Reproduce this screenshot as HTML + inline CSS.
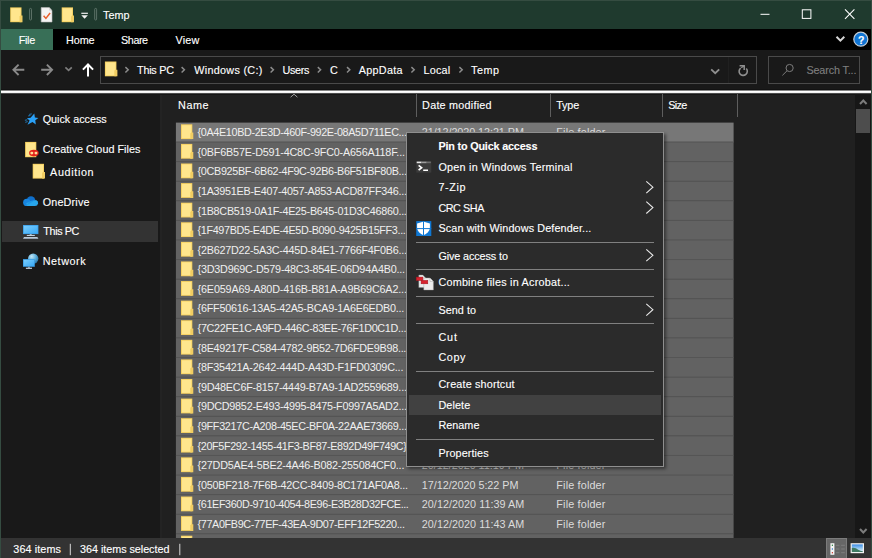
<!DOCTYPE html>
<html><head><meta charset="utf-8"><title>Temp</title>
<style>
html,body{margin:0;padding:0;background:#191919;}
body{width:872px;height:558px;position:relative;overflow:hidden;font-family:"Liberation Sans",Arial,sans-serif;font-size:10.8px;color:#fff;}
.abs{position:absolute;}
.t{position:absolute;white-space:pre;line-height:14px;height:14px;-webkit-text-stroke:0.12px currentColor;}
.l{-webkit-text-stroke:0;}
#win{position:absolute;left:0;top:0;width:872px;height:558px;background:#191919;}
#title{left:0;top:0;width:872px;height:29px;background:#1f3a2e;}
#ribbon{left:1px;top:29px;width:870px;height:21px;background:#000;}
#filetab{left:1px;top:29px;width:52px;height:21px;background:#386f57;}
#addr{left:1px;top:50px;width:870px;height:40px;background:#191919;}
#addrbox{left:100px;top:56px;width:655px;height:26px;border:1px solid #4a4a4a;background:#191919;}
#refdiv{left:728px;top:57px;width:1px;height:26px;background:#202020;}
#search{left:768px;top:56px;width:90px;height:26px;border:1px solid #4a4a4a;background:#191919;}
#wline{left:1px;top:89px;width:870px;height:6px;background:linear-gradient(#131313 0,#131313 1px,#858585 1px,#858585 2px,#fff 2px,#fff 3px,#f2f2f2 3px,#f2f2f2 4px,#4c4c4c 4px,#4c4c4c 5px,#161616 5px,#161616 6px);}
#nav{left:1px;top:94px;width:159px;height:444px;background:#191919;}
#split{left:160px;top:94px;width:2px;height:444px;background:#232323;}
#files{left:162px;top:94px;width:693px;height:444px;background:#202020;}
#navsel{left:2px;top:221px;width:156px;height:21px;background:#333333;}
#sbar{left:855px;top:94px;width:16px;height:444px;background:#171717;}
#thumb{left:856px;top:109px;width:14px;height:24px;background:#4d4d4d;}
#status{left:1px;top:538px;width:870px;height:20px;background:#333333;}
#bl{left:0;top:0;width:1px;height:558px;background:#354c41;}
#br{left:871px;top:0;width:1px;height:558px;background:#354c41;}
#bt{left:0;top:0;width:872px;height:1px;background:#354c41;}
#menu{left:406px;top:132px;width:256px;height:333px;background:#2b2b2b;border:1px solid #8f8f8f;box-shadow:2px 2px 3px rgba(0,0,0,.45);box-sizing:content-box;}
#menuhl{left:409px;top:395px;width:252px;height:20px;background:#414141;}
.msep{position:absolute;left:416px;width:238px;height:1px;background:#808080;}
.csep{position:absolute;top:94px;width:1px;height:23px;background:#5e5e5e;}
svg{position:absolute;left:0;top:0;overflow:visible;}
</style></head>
<body>
<div id="win">
<div class="abs" id="title"></div>
<div class="abs" id="ribbon"></div>
<div class="abs" id="filetab"></div>
<div class="abs" id="addr"></div>
<div class="abs" id="addrbox"></div>
<div class="abs" id="refdiv"></div>
<div class="abs" id="search"></div>
<div class="abs" id="nav"></div>
<div class="abs" id="split"></div>
<div class="abs" id="files"></div>
<div class="abs" id="wline"></div>
<div class="abs" id="navsel"></div>
<div class="abs" id="sbar"></div>
<div class="abs" id="thumb"></div>
<div class="abs" id="status"></div>
<div class="abs" id="bl"></div>
<div class="abs" id="br"></div>
<div class="abs" id="bt"></div>
<div class="csep" style="left:416px"></div>
<div class="csep" style="left:550px"></div>
<div class="csep" style="left:662px"></div>
<div class="csep" style="left:737px"></div>

<svg width="872" height="558" viewBox="0 0 872 558">
<defs>
<g id="fold">
<rect x="0" y="0" width="11.3" height="14.8" fill="#f6d05f"/>
<rect x="0.9" y="0.9" width="9.5" height="13" fill="#ffe68d"/>
<path d="M9.3 14.8V9.2l1-1h2v6.6z" fill="#f1cd62"/>
</g>
<g id="chev"><path d="M0 0l6.6 5.9L0 11.8" fill="none" stroke="#e8e8e8" stroke-width="1.1"/></g>
<g id="crumb"><path d="M0 0l2.800 2.700L0 5.400" fill="none" stroke="#8c8c8c" stroke-width="1.500"/></g>
</defs>
<clipPath id="cp"><rect x="162" y="94" width="693" height="444"/></clipPath><g clip-path="url(#cp)">
<rect x="175.9" y="122.60" width="557.7" height="19.59" fill="#777777"/>
<rect x="175.9" y="142.01" width="557.7" height="19.59" fill="#626262"/>
<rect x="175.9" y="141.51" width="557.7" height="1" fill="#555555"/>
<rect x="175.9" y="161.60" width="557.7" height="19.59" fill="#626262"/>
<rect x="175.9" y="161.10" width="557.7" height="1" fill="#555555"/>
<rect x="175.9" y="181.19" width="557.7" height="19.59" fill="#626262"/>
<rect x="175.9" y="180.69" width="557.7" height="1" fill="#555555"/>
<rect x="175.9" y="200.78" width="557.7" height="19.59" fill="#626262"/>
<rect x="175.9" y="200.28" width="557.7" height="1" fill="#555555"/>
<rect x="175.9" y="220.37" width="557.7" height="19.59" fill="#626262"/>
<rect x="175.9" y="219.87" width="557.7" height="1" fill="#555555"/>
<rect x="175.9" y="239.96" width="557.7" height="19.59" fill="#626262"/>
<rect x="175.9" y="239.46" width="557.7" height="1" fill="#555555"/>
<rect x="175.9" y="259.55" width="557.7" height="19.59" fill="#626262"/>
<rect x="175.9" y="259.05" width="557.7" height="1" fill="#555555"/>
<rect x="175.9" y="279.14" width="557.7" height="19.59" fill="#626262"/>
<rect x="175.9" y="278.64" width="557.7" height="1" fill="#555555"/>
<rect x="175.9" y="298.73" width="557.7" height="19.59" fill="#626262"/>
<rect x="175.9" y="298.23" width="557.7" height="1" fill="#555555"/>
<rect x="175.9" y="318.32" width="557.7" height="19.59" fill="#626262"/>
<rect x="175.9" y="317.82" width="557.7" height="1" fill="#555555"/>
<rect x="175.9" y="337.91" width="557.7" height="19.59" fill="#626262"/>
<rect x="175.9" y="337.41" width="557.7" height="1" fill="#555555"/>
<rect x="175.9" y="357.50" width="557.7" height="19.59" fill="#626262"/>
<rect x="175.9" y="357.00" width="557.7" height="1" fill="#555555"/>
<rect x="175.9" y="377.09" width="557.7" height="19.59" fill="#626262"/>
<rect x="175.9" y="376.59" width="557.7" height="1" fill="#555555"/>
<rect x="175.9" y="396.68" width="557.7" height="19.59" fill="#626262"/>
<rect x="175.9" y="396.18" width="557.7" height="1" fill="#555555"/>
<rect x="175.9" y="416.27" width="557.7" height="19.59" fill="#626262"/>
<rect x="175.9" y="415.77" width="557.7" height="1" fill="#555555"/>
<rect x="175.9" y="435.86" width="557.7" height="19.59" fill="#626262"/>
<rect x="175.9" y="435.36" width="557.7" height="1" fill="#555555"/>
<rect x="175.9" y="455.45" width="557.7" height="19.59" fill="#626262"/>
<rect x="175.9" y="454.95" width="557.7" height="1" fill="#555555"/>
<rect x="175.9" y="475.04" width="557.7" height="19.59" fill="#626262"/>
<rect x="175.9" y="474.54" width="557.7" height="1" fill="#555555"/>
<rect x="175.9" y="494.63" width="557.7" height="19.59" fill="#626262"/>
<rect x="175.9" y="494.13" width="557.7" height="1" fill="#555555"/>
<rect x="175.9" y="514.22" width="557.7" height="19.59" fill="#626262"/>
<rect x="175.9" y="513.72" width="557.7" height="1" fill="#555555"/>
<rect x="175.9" y="533.81" width="557.7" height="19.59" fill="#626262"/>
<rect x="175.9" y="533.31" width="557.7" height="1" fill="#555555"/>
<use href="#fold" x="181" y="124.32"/>
<use href="#fold" x="181" y="143.91"/>
<use href="#fold" x="181" y="163.50"/>
<use href="#fold" x="181" y="183.09"/>
<use href="#fold" x="181" y="202.68"/>
<use href="#fold" x="181" y="222.27"/>
<use href="#fold" x="181" y="241.86"/>
<use href="#fold" x="181" y="261.45"/>
<use href="#fold" x="181" y="281.04"/>
<use href="#fold" x="181" y="300.63"/>
<use href="#fold" x="181" y="320.22"/>
<use href="#fold" x="181" y="339.81"/>
<use href="#fold" x="181" y="359.40"/>
<use href="#fold" x="181" y="378.99"/>
<use href="#fold" x="181" y="398.58"/>
<use href="#fold" x="181" y="418.17"/>
<use href="#fold" x="181" y="437.76"/>
<use href="#fold" x="181" y="457.35"/>
<use href="#fold" x="181" y="476.94"/>
<use href="#fold" x="181" y="496.53"/>
<use href="#fold" x="181" y="516.12"/>
<use href="#fold" x="181" y="535.71"/>
</g>
<!-- title bar icons -->
<use href="#fold" x="10.2" y="7.4"/>
<rect x="29.6" y="8.4" width="1.9" height="11.6" rx=".9" fill="none" stroke="#6b7f75" stroke-width=".8"/>
<g transform="translate(41.2,7.6)">
<path d="M0 0h8l2.8 2.8V14.4H0z" fill="#f4f4f4" stroke="#b9b9b9" stroke-width=".6"/>
<path d="M8 0v2.8h2.8" fill="#d5d5d5"/>
<path d="M2.4 8.2l2.3 2.6l4.2-5.4" fill="none" stroke="#e8602c" stroke-width="1.5"/>
</g>
<use href="#fold" x="61.7" y="7.4"/>
<rect x="81.3" y="12.7" width="6.6" height="1.2" fill="#f0f0f0"/>
<path d="M81.3 15.3h6.6l-3.3 3.5z" fill="#f0f0f0"/>
<rect x="94.7" y="8.4" width="1.9" height="11.6" rx=".9" fill="none" stroke="#6b7f75" stroke-width=".8"/>
<!-- window controls -->
<rect x="760.5" y="13.8" width="9" height="1" fill="#fff"/>
<rect x="802.3" y="9.8" width="8.6" height="8.6" fill="none" stroke="#fff" stroke-width="1"/>
<path d="M845 9.4l9.4 9.4M854.4 9.4l-9.4 9.4" stroke="#fff" stroke-width="1.1" fill="none"/>
<!-- ribbon right -->
<path d="M836.5 36.8l3.9 3.8l3.9-3.8" fill="none" stroke="#d6d6d6" stroke-width="2"/>
<circle cx="860.8" cy="39.2" r="7" fill="#0f74d4" stroke="#c4cdd6" stroke-width="1.2"/>
<!-- nav arrows -->
<path d="M24.3 69.8H13.6M18.6 64.6l-5.2 5.2l5.2 5.2" fill="none" stroke="#8a8a8a" stroke-width="1.9"/>
<path d="M41.2 69.8H51.9M46.9 64.6l5.2 5.2l-5.2 5.2" fill="none" stroke="#8a8a8a" stroke-width="1.9"/>
<path d="M65.4 67.4l3.2 3l3.2-3" fill="none" stroke="#7d7d7d" stroke-width="1.7"/>
<path d="M88 76.4V64.6M82.9 69.6l5.1-5.1l5.1 5.1" fill="none" stroke="#ffffff" stroke-width="2"/>
<g transform="translate(104.9,61.5)"><rect x="0" y="0" width="11.5" height="14.8" fill="#f6d05f"/><rect x=".9" y=".9" width="9.7" height="13" fill="#ffe68d"/><path d="M9.4 14.8V9.2l1-1h2.1v6.6z" fill="#f1cd62"/></g>
<use href="#crumb" x="125.4" y="67.100"/>
<use href="#crumb" x="181.6" y="67.100"/>
<use href="#crumb" x="270.6" y="67.100"/>
<use href="#crumb" x="317.8" y="67.100"/>
<use href="#crumb" x="347" y="67.100"/>
<use href="#crumb" x="411.4" y="67.100"/>
<use href="#crumb" x="459.4" y="67.100"/>
<path d="M711.2 69.4l4 3.8l4-3.8" fill="none" stroke="#8f8f8f" stroke-width="1.9"/>
<path d="M746.25 68.56A4.1 4.1 0 1 1 740.68 68.07" fill="none" stroke="#8f8f8f" stroke-width="1.6"/>
<path d="M739.6 65.7h4.6v4.4" fill="none" stroke="#8f8f8f" stroke-width="1.5"/><path d="M741.2 67.8l3-2.1" stroke="#8f8f8f" stroke-width="1.4"/>
<circle cx="789.6" cy="68" r="3.6" fill="none" stroke="#7c7c7c" stroke-width="1"/>
<path d="M787 70.8l-4.6 4.6" stroke="#7c7c7c" stroke-width="1"/>
<!-- sort chevron -->
<path d="M290.6 97.2l3.4-3l3.4 3" fill="none" stroke="#9d9d9d" stroke-width="1"/>
<!-- scrollbar arrows -->
<path d="M860 104l3.300-3.500l3.300 3.500" fill="none" stroke="#7c7c7c" stroke-width="2"/>
<path d="M860 529l3.300 3.500l3.300-3.500" fill="none" stroke="#7c7c7c" stroke-width="2"/>
<!-- nav icons -->
<defs>
<linearGradient id="gmon" x1="0" y1="0" x2="1" y2="1"><stop offset="0" stop-color="#7bcdfd"/><stop offset="1" stop-color="#38a9f5"/></linearGradient>
<radialGradient id="gglobe" cx=".35" cy=".3" r=".8"><stop offset="0" stop-color="#c4e6f5"/><stop offset=".5" stop-color="#5fb0dc"/><stop offset="1" stop-color="#1f6c9e"/></radialGradient>
</defs>
<path d="M34.3 113.6l.6 3.800l3.500.600l-3.100 2.200l.500 4.400l-3.300-2.500l-5 2.700l2.100-4.300l-2.700-2.300l3.700-.500z" fill="#2aa0f6"/>
<path d="M29.200 114.400l2.600-.500M28.200 115.900l2.200-.400M24.900 120.300l2.400-.500M25.300 122.300l2.400-.700" stroke="#2390e0" stroke-width=".8" fill="none"/>
<g transform="translate(25.100,141.900)"><rect x="0" y="0" width="11.200" height="15.300" fill="#f6d05f"/><rect x=".9" y=".9" width="9.400" height="13.500" fill="#ffe68d"/><ellipse cx="8.800" cy="11.200" rx="4.800" ry="3.300" fill="#e2231a"/><ellipse cx="6.700" cy="11.200" rx="1.500" ry="1.300" fill="#ffdb95"/><ellipse cx="10.900" cy="11.200" rx="1.500" ry="1.300" fill="#ffdb95"/></g>
<use href="#fold" x="32.700" y="163.800"/>
<circle cx="31" cy="200.600" r="4.300" fill="#0f70cc"/>
<circle cx="26.800" cy="202.400" r="3.700" fill="#1885df"/>
<path d="M26.800 206.100h8.200a3.200 3.200 0 0 0 1-6.200l-9.600 3.200z" fill="#28a6ec"/>
<path d="M26 206.100l9.600-6.300l-6 1.400z" fill="#1e96e6"/>
<g transform="translate(23,225)"><rect x="0" y="0" width="15.400" height="9.100" fill="#3a9fe8"/><rect x=".8" y=".8" width="13.800" height="7.500" fill="url(#gmon)"/><rect x="6.700" y="9.100" width="2" height="1" fill="#a9bccd"/><rect x="3.800" y="9.900" width="8" height="1.100" fill="#c3d2e0"/><path d="M1 11.900h13.400l1 1.900h-15.400z" fill="#b9c9d9"/></g>
<circle cx="33.200" cy="258.600" r="5.200" fill="url(#gglobe)"/>
<g transform="translate(23,259.100)"><rect x="0" y="0" width="11.800" height="7.700" fill="#3a9fe8"/><rect x=".8" y=".8" width="10.200" height="6.100" fill="url(#gmon)"/><rect x="4.900" y="7.700" width="2" height=".9" fill="#a9bccd"/><rect x="2.900" y="8.600" width="6.100" height="1.200" fill="#c3d2e0"/></g>
<!-- status bar view buttons -->
<rect x="826.500" y="538.500" width="20" height="20" fill="#666666" stroke="#7c7c7c" stroke-width="1"/>
<rect x="830.400" y="543.200" width="4" height="11.600" fill="#f4f4f4"/>
<rect x="831.800" y="544.600" width="1.200" height="1.400" fill="#3a8a4a"/><rect x="831.800" y="548.300" width="1.200" height="1.400" fill="#3f7fd0"/><rect x="831.800" y="552" width="1.200" height="1.400" fill="#d0443a"/>
<path d="M836 545.300h3.400M841.200 545.300h3.600M836 549h3.400M841.200 549h3.600M836 552.700h3.400M841.200 552.700h3.600" stroke="#7e7e7e" stroke-width="1"/>
<rect x="850.600" y="543.200" width="13.400" height="10" fill="#f2f2f2"/>
<linearGradient id="gsky" x1="0" y1="0" x2="0" y2="1"><stop offset="0" stop-color="#3a8be6"/><stop offset=".55" stop-color="#9ccdf3"/><stop offset="1" stop-color="#eef6fb"/></linearGradient><rect x="851.800" y="544.400" width="11" height="7.600" fill="url(#gsky)"/>
<path d="M851.800 552v-4c2.400-.6 4.600.4 6.400 1.800c1.600.8 3 1.200 4.600 1.400v.8z" fill="#3f7a63"/>
<!-- status separators -->
<rect x="69.800" y="543.800" width="1" height="11.400" fill="#d8d8d8"/>
<rect x="179.300" y="543.800" width="1" height="11.400" fill="#d8d8d8"/>
</svg>

<span class="t" style="left:857.900px;top:32.700px;font-weight:700;font-size:10.500px;color:#fff;">?</span>
<span class="t" style="left:102.9px;top:7.9px;letter-spacing:0.098px;color:#ffffff;">Temp</span>
<span class="t" style="left:18.8px;top:32.9px;letter-spacing:-0.335px;color:#ffffff;">File</span>
<span class="t" style="left:66.1px;top:32.9px;letter-spacing:-0.104px;color:#ffffff;">Home</span>
<span class="t" style="left:121.1px;top:32.9px;letter-spacing:-0.453px;color:#ffffff;">Share</span>
<span class="t" style="left:175.4px;top:32.9px;letter-spacing:0.260px;color:#ffffff;">View</span>
<span class="t" style="left:137.0px;top:62.6px;letter-spacing:-0.218px;color:#ffffff;">This PC</span>
<span class="t" style="left:194.2px;top:62.6px;letter-spacing:0.300px;color:#ffffff;">Windows (C:)</span>
<span class="t" style="left:282.4px;top:62.6px;letter-spacing:-0.301px;color:#ffffff;">Users</span>
<span class="t" style="left:329.9px;top:62.6px;letter-spacing:0.688px;color:#ffffff;">C</span>
<span class="t" style="left:358.7px;top:62.6px;letter-spacing:0.311px;color:#ffffff;">AppData</span>
<span class="t" style="left:423.4px;top:62.6px;letter-spacing:0.247px;color:#ffffff;">Local</span>
<span class="t" style="left:471.0px;top:62.6px;letter-spacing:0.498px;color:#ffffff;">Temp</span>
<span class="t" style="left:806.4px;top:62.6px;letter-spacing:-0.142px;color:#7e7e7e;">Search T...</span>
<span class="t" style="left:42.7px;top:112.1px;letter-spacing:-0.018px;color:#ffffff;">Quick access</span>
<span class="t" style="left:42.7px;top:142.4px;letter-spacing:0.025px;color:#ffffff;">Creative Cloud Files</span>
<span class="t" style="left:50.1px;top:164.6px;letter-spacing:0.638px;color:#ffffff;">Audition</span>
<span class="t" style="left:42.7px;top:194.8px;letter-spacing:0.170px;color:#ffffff;">OneDrive</span>
<span class="t" style="left:43.3px;top:224.4px;letter-spacing:-0.384px;color:#ffffff;">This PC</span>
<span class="t" style="left:42.7px;top:254.3px;letter-spacing:0.548px;color:#ffffff;">Network</span>
<span class="t" style="left:178.1px;top:98.4px;letter-spacing:0.496px;color:#ffffff;">Name</span>
<span class="t" style="left:422.1px;top:98.4px;letter-spacing:0.240px;color:#ffffff;">Date modified</span>
<span class="t" style="left:556.3px;top:98.4px;letter-spacing:-0.174px;color:#ffffff;">Type</span>
<span class="t" style="left:668.2px;top:98.4px;letter-spacing:-0.605px;color:#ffffff;">Size</span>
<span class="t" style="left:13.3px;top:542.1px;letter-spacing:0.098px;color:#ffffff;">364 items</span>
<span class="t" style="left:80.1px;top:542.1px;letter-spacing:-0.043px;color:#ffffff;">364 items selected</span>
<span class="t l" style="left:197.6px;top:125.1px;letter-spacing:-0.356px;color:#efefef;">{0A4E10BD-2E3D-460F-992E-08A5D711EC...</span>
<span class="t l" style="left:421.8px;top:125.1px;letter-spacing:-0.065px;color:#dcdcdc;">21/12/2020 12:21 PM</span>
<span class="t l" style="left:556.3px;top:125.1px;letter-spacing:0.169px;color:#dcdcdc;">File folder</span>
<span class="t l" style="left:197.6px;top:144.7px;letter-spacing:-0.185px;color:#efefef;">{0BF6B57E-D591-4C8C-9FC0-A656A118F...</span>
<span class="t l" style="left:421.8px;top:144.7px;letter-spacing:-0.065px;color:#dcdcdc;">21/12/2020 12:21 PM</span>
<span class="t l" style="left:556.3px;top:144.7px;letter-spacing:0.169px;color:#dcdcdc;">File folder</span>
<span class="t l" style="left:197.6px;top:164.3px;letter-spacing:-0.328px;color:#efefef;">{0CB925BF-6B62-4F9C-92B6-B6F51BF80B...</span>
<span class="t l" style="left:421.8px;top:164.3px;letter-spacing:-0.065px;color:#dcdcdc;">21/12/2020 12:21 PM</span>
<span class="t l" style="left:556.3px;top:164.3px;letter-spacing:0.169px;color:#dcdcdc;">File folder</span>
<span class="t l" style="left:197.6px;top:183.9px;letter-spacing:-0.264px;color:#efefef;">{1A3951EB-E407-4057-A853-ACD87FF346...</span>
<span class="t l" style="left:421.8px;top:183.9px;letter-spacing:-0.065px;color:#dcdcdc;">21/12/2020 12:21 PM</span>
<span class="t l" style="left:556.3px;top:183.9px;letter-spacing:0.169px;color:#dcdcdc;">File folder</span>
<span class="t l" style="left:197.6px;top:203.5px;letter-spacing:-0.265px;color:#efefef;">{1B8CB519-0A1F-4E25-B645-01D3C46860...</span>
<span class="t l" style="left:421.8px;top:203.5px;letter-spacing:-0.065px;color:#dcdcdc;">21/12/2020 12:21 PM</span>
<span class="t l" style="left:556.3px;top:203.5px;letter-spacing:0.169px;color:#dcdcdc;">File folder</span>
<span class="t l" style="left:197.6px;top:223.1px;letter-spacing:-0.359px;color:#efefef;">{1F497BD5-E4DE-4E5D-B090-9425B15FF3...</span>
<span class="t l" style="left:421.8px;top:223.1px;letter-spacing:-0.065px;color:#dcdcdc;">21/12/2020 12:21 PM</span>
<span class="t l" style="left:556.3px;top:223.1px;letter-spacing:0.169px;color:#dcdcdc;">File folder</span>
<span class="t l" style="left:197.6px;top:242.7px;letter-spacing:-0.248px;color:#efefef;">{2B627D22-5A3C-445D-84E1-7766F4F0B6...</span>
<span class="t l" style="left:421.8px;top:242.7px;letter-spacing:-0.065px;color:#dcdcdc;">21/12/2020 12:21 PM</span>
<span class="t l" style="left:556.3px;top:242.7px;letter-spacing:0.169px;color:#dcdcdc;">File folder</span>
<span class="t l" style="left:197.6px;top:262.3px;letter-spacing:-0.224px;color:#efefef;">{3D3D969C-D579-48C3-854E-06D94A4B0...</span>
<span class="t l" style="left:421.8px;top:262.3px;letter-spacing:-0.065px;color:#dcdcdc;">21/12/2020 12:21 PM</span>
<span class="t l" style="left:556.3px;top:262.3px;letter-spacing:0.169px;color:#dcdcdc;">File folder</span>
<span class="t l" style="left:197.6px;top:281.8px;letter-spacing:-0.172px;color:#efefef;">{6E059A69-A80D-416B-B81A-A9B69C6A2...</span>
<span class="t l" style="left:421.8px;top:281.8px;letter-spacing:-0.065px;color:#dcdcdc;">21/12/2020 12:21 PM</span>
<span class="t l" style="left:556.3px;top:281.8px;letter-spacing:0.169px;color:#dcdcdc;">File folder</span>
<span class="t l" style="left:197.6px;top:301.4px;letter-spacing:-0.246px;color:#efefef;">{6FF50616-13A5-42A5-BCA9-1A6E6EDB0...</span>
<span class="t l" style="left:421.8px;top:301.4px;letter-spacing:-0.065px;color:#dcdcdc;">21/12/2020 12:21 PM</span>
<span class="t l" style="left:556.3px;top:301.4px;letter-spacing:0.169px;color:#dcdcdc;">File folder</span>
<span class="t l" style="left:197.6px;top:321.0px;letter-spacing:-0.318px;color:#efefef;">{7C22FE1C-A9FD-446C-83EE-76F1D0C1D...</span>
<span class="t l" style="left:421.8px;top:321.0px;letter-spacing:-0.065px;color:#dcdcdc;">21/12/2020 12:21 PM</span>
<span class="t l" style="left:556.3px;top:321.0px;letter-spacing:0.169px;color:#dcdcdc;">File folder</span>
<span class="t l" style="left:197.6px;top:340.6px;letter-spacing:-0.262px;color:#efefef;">{8E49217F-C584-4782-9B52-7D6FDE9B98...</span>
<span class="t l" style="left:421.8px;top:340.6px;letter-spacing:-0.065px;color:#dcdcdc;">21/12/2020 12:21 PM</span>
<span class="t l" style="left:556.3px;top:340.6px;letter-spacing:0.169px;color:#dcdcdc;">File folder</span>
<span class="t l" style="left:197.6px;top:360.2px;letter-spacing:-0.185px;color:#efefef;">{8F35421A-2642-444D-A43D-F1FD0309C...</span>
<span class="t l" style="left:421.8px;top:360.2px;letter-spacing:-0.065px;color:#dcdcdc;">21/12/2020 12:21 PM</span>
<span class="t l" style="left:556.3px;top:360.2px;letter-spacing:0.169px;color:#dcdcdc;">File folder</span>
<span class="t l" style="left:197.6px;top:379.8px;letter-spacing:-0.232px;color:#efefef;">{9D48EC6F-8157-4449-B7A9-1AD2559689...</span>
<span class="t l" style="left:421.8px;top:379.8px;letter-spacing:-0.065px;color:#dcdcdc;">21/12/2020 12:21 PM</span>
<span class="t l" style="left:556.3px;top:379.8px;letter-spacing:0.169px;color:#dcdcdc;">File folder</span>
<span class="t l" style="left:197.6px;top:399.4px;letter-spacing:-0.248px;color:#efefef;">{9DCD9852-E493-4995-8475-F0997A5AD2...</span>
<span class="t l" style="left:421.8px;top:399.4px;letter-spacing:-0.065px;color:#dcdcdc;">21/12/2020 12:21 PM</span>
<span class="t l" style="left:556.3px;top:399.4px;letter-spacing:0.169px;color:#dcdcdc;">File folder</span>
<span class="t l" style="left:197.6px;top:419.0px;letter-spacing:-0.313px;color:#efefef;">{9FF3217C-A208-45EC-BF0A-22AAE73669...</span>
<span class="t l" style="left:421.8px;top:419.0px;letter-spacing:-0.065px;color:#dcdcdc;">21/12/2020 12:21 PM</span>
<span class="t l" style="left:556.3px;top:419.0px;letter-spacing:0.169px;color:#dcdcdc;">File folder</span>
<span class="t l" style="left:197.6px;top:438.6px;letter-spacing:-0.362px;color:#efefef;">{20F5F292-1455-41F3-BF87-E892D49F749C}</span>
<span class="t l" style="left:421.8px;top:438.6px;letter-spacing:-0.065px;color:#dcdcdc;">21/12/2020 12:21 PM</span>
<span class="t l" style="left:556.3px;top:438.6px;letter-spacing:0.169px;color:#dcdcdc;">File folder</span>
<span class="t l" style="left:197.6px;top:458.2px;letter-spacing:-0.208px;color:#efefef;">{27DD5AE4-5BE2-4A46-B082-255084CF0...</span>
<span class="t l" style="left:421.8px;top:458.2px;letter-spacing:-0.020px;color:#dcdcdc;">20/12/2020 11:19 PM</span>
<span class="t l" style="left:556.3px;top:458.2px;letter-spacing:0.169px;color:#dcdcdc;">File folder</span>
<span class="t l" style="left:197.6px;top:477.7px;letter-spacing:-0.232px;color:#efefef;">{050BF218-7F6B-42CC-8409-8C171AF0A8...</span>
<span class="t l" style="left:421.8px;top:477.7px;letter-spacing:-0.038px;color:#dcdcdc;">17/12/2020 5:22 PM</span>
<span class="t l" style="left:556.3px;top:477.7px;letter-spacing:0.169px;color:#dcdcdc;">File folder</span>
<span class="t l" style="left:197.6px;top:497.3px;letter-spacing:-0.379px;color:#efefef;">{61EF360D-9710-4054-8E96-E3B28D32FCE...</span>
<span class="t l" style="left:421.8px;top:497.3px;letter-spacing:0.030px;color:#dcdcdc;">20/12/2020 11:39 AM</span>
<span class="t l" style="left:556.3px;top:497.3px;letter-spacing:0.169px;color:#dcdcdc;">File folder</span>
<span class="t l" style="left:197.6px;top:516.9px;letter-spacing:-0.364px;color:#efefef;">{77A0FB9C-77EF-43EA-9D07-EFF12F5220...</span>
<span class="t l" style="left:421.8px;top:516.9px;letter-spacing:0.030px;color:#dcdcdc;">20/12/2020 11:43 AM</span>
<span class="t l" style="left:556.3px;top:516.9px;letter-spacing:0.169px;color:#dcdcdc;">File folder</span>

<div class="abs" id="menu"></div>
<div class="abs" id="menuhl"></div>
<div class="msep" style="top:242px"></div>
<div class="msep" style="top:269px"></div>
<div class="msep" style="top:296px"></div>
<div class="msep" style="top:323px"></div>
<div class="msep" style="top:371px"></div>
<div class="msep" style="top:439px"></div>
<svg width="872" height="558" viewBox="0 0 872 558">
<use href="#chev" x="646.300" y="181.300"/>
<use href="#chev" x="646.300" y="201.700"/>
<use href="#chev" x="646.300" y="249.400"/>
<use href="#chev" x="646.300" y="303.800"/>
<!-- terminal icon -->
<g transform="translate(416.300,161.200)"><rect x="0" y="0" width="15" height="11.400" fill="#3b3b3b"/><rect x=".4" y=".4" width="4.800" height="1.600" fill="#e4e4e4"/><rect x="5.200" y=".4" width="5.200" height="1.600" fill="#9c9c9c"/><rect x="10.400" y=".4" width="4.200" height="1.600" fill="#6c6c6c"/><path d="M2.300 4.100l3 2.400l-3 2.400" fill="none" stroke="#fff" stroke-width="1.700"/><rect x="6.900" y="8.300" width="4.800" height="1.500" fill="#fff"/></g>
<!-- defender icon -->
<g transform="translate(416.200,221.100)"><rect x="0" y="0" width="15.100" height="14.900" fill="#0f78d4"/><path d="M.9 2.300l5.900-1.700h1l5.900 1.700v5.200c-.6 3-3 5.200-6.400 6.600c-3.400-1.400-5.800-3.600-6.400-6.600z" fill="#fff"/><path d="M7.300 0v14.900M0 7.500h15.100" stroke="#0f78d4" stroke-width="1"/></g>
<!-- acrobat combine icon -->
<g transform="translate(416.600,275.300)"><path d="M2.200 -.3h4l2.400 2.400v10.200H2.200z" fill="#e9eeee" stroke="#8a8a8a" stroke-width=".4"/><path d="M7.200 2.700h6.200l3.400 3.400v8.600H7.200z" fill="#ececec" stroke="#9a9a9a" stroke-width=".4"/><path d="M13.400 2.700v3.400h3.400z" fill="#fafafa" stroke="#8a8a8a" stroke-width=".4"/><rect x="-.4" y="1.800" width="6.700" height="3.400" fill="#d8232e" stroke="#a3151f" stroke-width=".5"/><rect x="4.500" y="5.100" width="6.700" height="3.400" fill="#d8232e" stroke="#a3151f" stroke-width=".5"/></g>
</svg>
<span class="t m" style="left:438.4px;top:139.3px;letter-spacing:-0.168px;color:#ffffff;font-weight:700;">Pin to Quick access</span>
<span class="t m" style="left:438.4px;top:159.8px;letter-spacing:0.251px;color:#ffffff;">Open in Windows Terminal</span>
<span class="t m" style="left:438.4px;top:180.3px;letter-spacing:0.598px;color:#ffffff;">7-Zip</span>
<span class="t m" style="left:438.4px;top:200.6px;letter-spacing:-0.432px;color:#ffffff;">CRC SHA</span>
<span class="t m" style="left:438.4px;top:221.1px;letter-spacing:0.127px;color:#ffffff;">Scan with Windows Defender...</span>
<span class="t m" style="left:438.4px;top:248.5px;letter-spacing:-0.101px;color:#ffffff;">Give access to</span>
<span class="t m" style="left:438.4px;top:275.1px;letter-spacing:0.233px;color:#ffffff;">Combine files in Acrobat...</span>
<span class="t m" style="left:438.4px;top:302.6px;letter-spacing:0.078px;color:#ffffff;">Send to</span>
<span class="t m" style="left:438.4px;top:329.8px;letter-spacing:0.844px;color:#ffffff;">Cut</span>
<span class="t m" style="left:438.4px;top:350.1px;letter-spacing:0.594px;color:#ffffff;">Copy</span>
<span class="t m" style="left:438.4px;top:377.0px;letter-spacing:0.171px;color:#ffffff;">Create shortcut</span>
<span class="t m" style="left:438.4px;top:398.0px;letter-spacing:0.116px;color:#ffffff;">Delete</span>
<span class="t m" style="left:438.4px;top:418.1px;letter-spacing:0.037px;color:#ffffff;">Rename</span>
<span class="t m" style="left:438.4px;top:445.5px;letter-spacing:0.109px;color:#ffffff;">Properties</span>
</div>
</body></html>
